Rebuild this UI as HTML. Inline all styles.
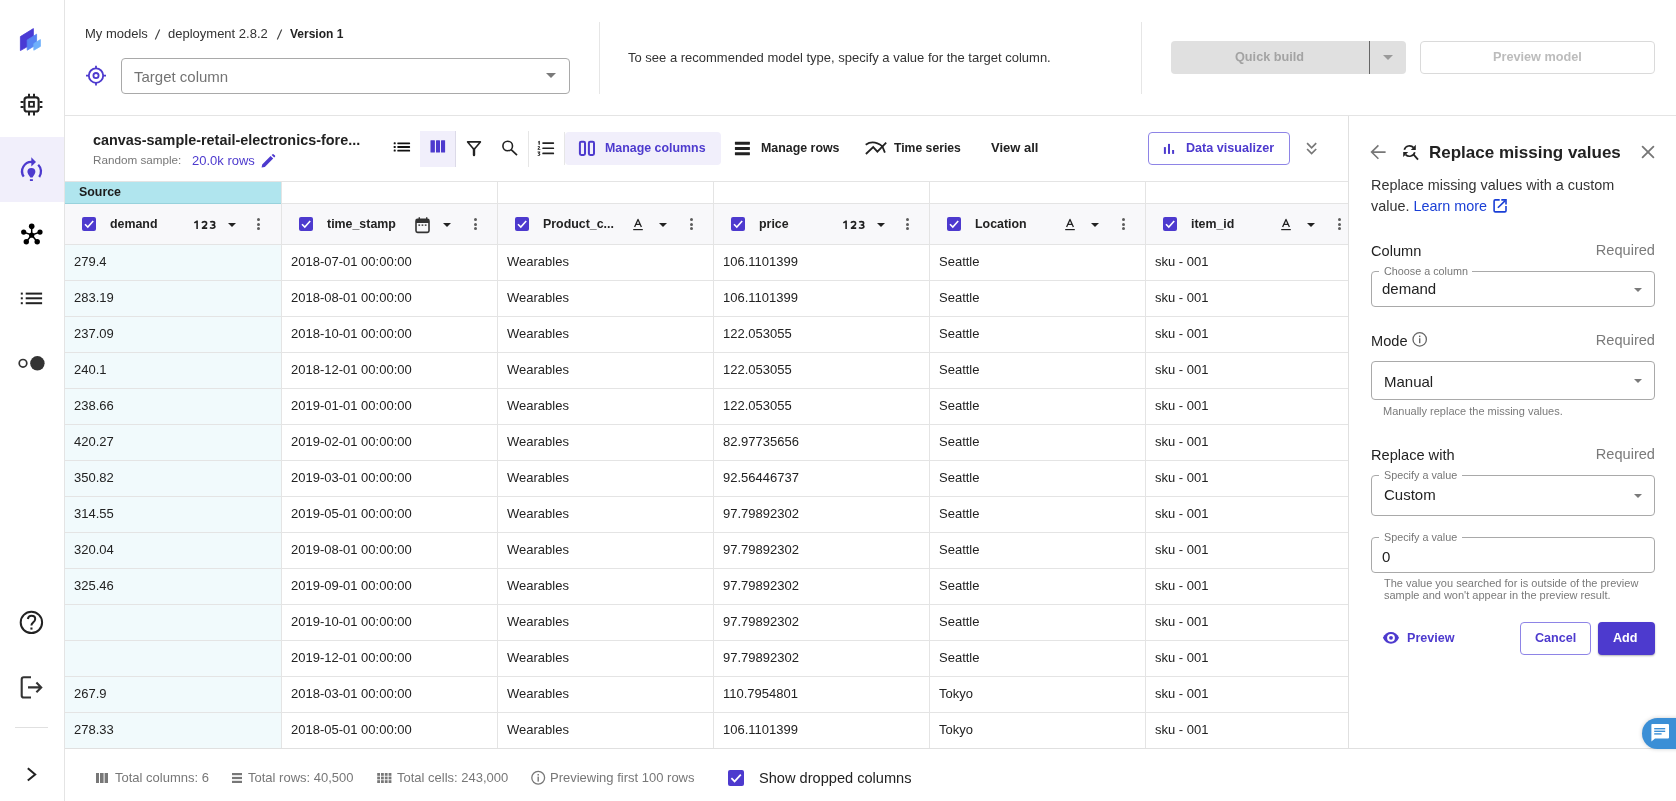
<!DOCTYPE html>
<html><head><meta charset="utf-8"><title>Canvas</title><style>
*{box-sizing:border-box;margin:0;padding:0}
html,body{width:1676px;height:801px;overflow:hidden;background:#fff;font-family:"Liberation Sans",sans-serif;color:#16191f}
.a{position:absolute}
.t{position:absolute;white-space:nowrap;line-height:1}
.b{font-weight:bold}
.sel{position:absolute;border:1px solid #a9a9a9;border-radius:4px;background:#fff}
.tri{position:absolute;width:0;height:0;border-left:5px solid transparent;border-right:5px solid transparent;border-top:5px solid #7a7a7a}
.car{position:absolute;width:0;height:0;border-left:4px solid transparent;border-right:4px solid transparent;border-top:4px solid #222}
.vl{position:absolute;background:#e6e6e6;width:1px}
.cb{position:absolute;width:14px;height:14px;border-radius:2px;background:#4d3ace}
.cell{position:absolute;font-size:13px;color:#222;white-space:nowrap;line-height:1}
.keb{position:absolute;width:3px}
.keb i{display:block;width:3px;height:3px;border-radius:50%;background:#5c5c5c;margin-bottom:1.6px}
</style></head><body><div class="a" style="left:0;top:0;width:1676px;height:801px;will-change:transform">
<div class="a" style="left:0;top:0;width:65px;height:801px;background:#fff;border-right:1px solid #e4e4e4"></div>
<div class="a" style="left:0;top:137px;width:64px;height:65px;background:#f1effb"></div>
<svg class="a" style="left:0;top:0" width="64" height="801" viewBox="0 0 64 801">
<g stroke-linejoin="round">
<path d="M20.4 36.6 L33.4 28.6 L33.4 43.2 L20.4 50.6 Z" fill="#4a3ad4" stroke="#4a3ad4" stroke-width="0.8"/>
<path d="M27.2 40 L36.6 34.2 L36.6 44.6 L27.2 50.2 Z" fill="#5683f2" stroke="#5683f2" stroke-width="0.8"/>
<path d="M33.8 43.6 L40.4 39.6 L40.4 46.4 L33.8 50.2 Z" fill="#6fb0fb" stroke="#6fb0fb" stroke-width="0.8"/>
</g>
<g fill="none" stroke="#222" stroke-width="2">
<rect x="24.5" y="97.4" width="14.1" height="14.1" rx="2.6" stroke-width="2.1"/>
<rect x="29.1" y="101.9" width="4.8" height="4.8" stroke-width="1.9"/>
<path d="M29 93.8V97M34 93.8V97M29 112V115.5M34 112V115.5M20.6 102H23.6M20.6 107H23.6M39.6 102H42.4M39.6 107H42.4"/>
</g>
<g fill="none" stroke="#4d3ace" stroke-width="2.3">
<path d="M23.7 176.6 A9.4 9.4 0 0 1 32.5 162"/>
<path d="M38.2 164.8 A9.4 9.4 0 0 1 39.2 177"/>
</g>
<path d="M31.3 157.2 L36 162 L31.3 166.6 Z" fill="#4d3ace"/>
<path d="M27.4 172 A4 4 0 1 1 35.4 172 Q35.2 174 32.5 177.6 L30.3 177.6 Q27.6 174 27.4 172 Z" fill="#4d3ace"/>
<rect x="29.9" y="179.2" width="3" height="1.8" fill="#4d3ace"/>
<g fill="#000" stroke="#000" stroke-width="1.5">
<path d="M31.7 235 L31.7 226.3 M31.7 235 L23.7 232.1 M31.7 235 L40 232.1 M31.7 235 L26.3 241.8 M31.7 235 L37.2 241.8" fill="none"/>
<circle cx="31.7" cy="235.2" r="2.6" stroke="none"/>
<circle cx="31.7" cy="226.3" r="2.8" stroke="none"/>
<circle cx="23.7" cy="232.1" r="2.6" stroke="none"/>
<circle cx="40" cy="232.1" r="2.6" stroke="none"/>
<circle cx="26.3" cy="241.8" r="2.7" stroke="none"/>
<circle cx="37.2" cy="241.8" r="2.7" stroke="none"/>
</g>
<g fill="#222">
<rect x="20.8" y="292.6" width="2" height="2"/><rect x="20.8" y="297.3" width="2" height="2"/><rect x="20.8" y="302.2" width="2" height="2"/>
<rect x="25.7" y="292.6" width="16.4" height="2"/><rect x="25.7" y="297.3" width="16.4" height="2"/><rect x="25.7" y="302.2" width="16.4" height="2"/>
</g>
<circle cx="23" cy="363.3" r="3.8" fill="none" stroke="#333" stroke-width="1.7"/>
<circle cx="37.4" cy="363.3" r="7.2" fill="#333"/>
<circle cx="31.4" cy="622.4" r="10.7" fill="none" stroke="#222" stroke-width="2"/>
<path d="M27.8 619 Q28.5 615.8 31.5 615.8 Q35.2 615.8 35.2 619 Q35.2 621 33 622.6 Q31.4 623.8 31.4 625.6" fill="none" stroke="#222" stroke-width="2"/>
<rect x="30.4" y="627.5" width="2.1" height="2.1" fill="#222"/>
<path d="M31 677.3 H23.8 Q21.7 677.3 21.7 679.4 V695.4 Q21.7 697.5 23.8 697.5 H31" fill="none" stroke="#333" stroke-width="2.1"/>
<path d="M28 687.4 H41 M36.4 682.6 L41.2 687.4 L36.4 692.2" fill="none" stroke="#333" stroke-width="2.1"/>
<rect x="15" y="727" width="33" height="1" fill="#e0e0e0"/>
<path d="M27.8 768.2 L35.2 774.4 L27.8 780.6" fill="none" stroke="#222" stroke-width="2"/>
</svg>
<div class="a" style="left:65px;top:115px;width:1611px;height:1px;background:#e4e4e4"></div>
<div class="t" style="left:85px;top:27px;font-size:13px;color:#333">My models</div>
<svg class="a" style="left:150px;top:25px" width="140" height="18" viewBox="150 25 140 18"><path d="M155.3 39.5 L159.7 29.5 M277.3 39.5 L281.7 29.5" stroke="#444" stroke-width="1.15"/></svg>
<div class="t" style="left:168px;top:27px;font-size:13px;color:#333">deployment 2.8.2</div>
<div class="t b" style="left:290px;top:28px;font-size:12px;color:#222">Version 1</div>
<svg class="a" style="left:84px;top:64px" width="24" height="24" viewBox="0 0 24 24">
<circle cx="12" cy="11.6" r="7.2" fill="none" stroke="#4d3ace" stroke-width="1.8"/>
<circle cx="12" cy="11.6" r="2.6" fill="none" stroke="#4d3ace" stroke-width="1.8"/>
<path d="M12 1.8V5M12 18.2V21.4M2 11.6H5.2M18.8 11.6H22" stroke="#4d3ace" stroke-width="1.8"/>
</svg>
<div class="sel" style="left:121px;top:58px;width:449px;height:36px"></div>
<div class="t" style="left:134px;top:69px;font-size:15px;color:#737373">Target column</div>
<div class="tri" style="left:546px;top:73px"></div>
<div class="vl" style="left:599px;top:22px;height:72px"></div>
<div class="t" style="left:628px;top:51px;font-size:13px;color:#333">To see a recommended model type, specify a value for the target column.</div>
<div class="vl" style="left:1141px;top:22px;height:72px"></div>
<div class="a" style="left:1171px;top:41px;width:235px;height:33px;background:#e0e0e0;border-radius:4px"></div>
<div class="a" style="left:1369px;top:41px;width:1px;height:33px;background:#666"></div>
<div class="t b" style="left:1235px;top:51px;font-size:12.7px;color:#a3a3a3">Quick build</div>
<div class="tri" style="left:1383px;top:55px;border-top-color:#9a9a9a"></div>
<div class="a" style="left:1420px;top:41px;width:235px;height:33px;border:1px solid #dadada;border-radius:4px"></div>
<div class="t b" style="left:1493px;top:51px;font-size:12.7px;color:#bcbcbc">Preview model</div>
<div class="t b" style="left:93px;top:133px;font-size:14.4px;color:#222">canvas-sample-retail-electronics-fore...</div>
<div class="t" style="left:93px;top:154px;font-size:11.7px;color:#777">Random sample:</div>
<div class="t" style="left:192px;top:154px;font-size:13px;color:#4d3ace">20.0k rows</div>
<svg class="a" style="left:260px;top:154px" width="16" height="14" viewBox="0 0 16 14">
<path d="M2.2 10.4 L10.6 2 L13.2 4.6 L4.8 13 L1.6 13.6 Z M11.6 1 L12.6 0.2 Q13.2 -0.2 13.8 0.4 L15 1.6 Q15.4 2.2 15 2.8 L14.2 3.6 Z" fill="#4d3ace"/>
</svg>
<div class="a" style="left:420px;top:131px;width:35px;height:36px;background:#f1effb"></div>
<div class="vl" style="left:455px;top:131px;height:36px;background:#dcdae8"></div>
<div class="vl" style="left:528px;top:131px;height:36px"></div>
<div class="vl" style="left:564px;top:132px;height:33px"></div>
<div class="a" style="left:565px;top:132px;width:156px;height:33px;background:#f1effb;border-radius:4px"></div>
<svg class="a" style="left:380px;top:125px" width="200" height="40" viewBox="380 125 200 40">
<g fill="#111">
<rect x="393.7" y="142.3" width="2" height="2" rx="0.6"/><rect x="393.7" y="146" width="2" height="2" rx="0.6"/><rect x="393.7" y="149.6" width="2" height="2" rx="0.6"/>
<rect x="397.3" y="142.5" width="12.8" height="1.7" rx="0.6"/><rect x="397.3" y="146.1" width="12.8" height="1.8" rx="0.6"/><rect x="397.3" y="149.8" width="12.8" height="1.7" rx="0.6"/>
</g>
<g fill="#4d3ace">
<rect x="430.5" y="140.2" width="4.4" height="12.3" rx="0.5"/><rect x="436" y="140.2" width="4" height="12.3" rx="0.5"/><rect x="441" y="140.2" width="4.1" height="12.3" rx="0.5"/>
</g>
<path d="M467.6 141.9 H480.4 L474 149.4 Z" fill="none" stroke="#222" stroke-width="1.6" stroke-linejoin="round"/>
<path d="M474 149 V155" stroke="#222" stroke-width="2.4" stroke-linecap="round"/>
<circle cx="507.7" cy="146" r="4.8" fill="none" stroke="#222" stroke-width="1.6"/>
<path d="M511.2 149.6 L517 155.2" stroke="#222" stroke-width="1.7"/>
<g fill="#222">
<rect x="542.3" y="142.2" width="11.8" height="1.7" rx="0.6"/><rect x="542.3" y="147.4" width="11.8" height="1.7" rx="0.6"/><rect x="542.3" y="152.6" width="11.8" height="1.7" rx="0.6"/>
<path d="M538.4 141.2 L539.8 140.8 V144.8 H538.6 V142.2 L537.8 142.5 Z"/>
<path d="M537.6 146.6 Q538.6 145.8 539.6 146.2 Q540.4 146.8 539.6 148 L538.8 148.9 H540.4 V149.8 H537.6 V149 L538.9 147.6 Q539.2 147.1 538.9 146.9 Q538.4 146.8 537.9 147.3 Z"/>
<path d="M537.6 151.6 H540.2 V152.4 L539.2 153.2 Q540.4 153.4 540.4 154.6 Q540.2 156 538.6 156 Q537.8 156 537.4 155.6 L537.9 154.9 Q538.4 155.2 538.8 155.1 Q539.3 155 539.2 154.5 Q539 154 538.2 154.1 V153.4 L538.9 152.5 H537.6 Z"/>
</g>
</svg>
<svg class="a" style="left:570px;top:130px" width="340" height="36" viewBox="570 130 340 36">
<rect x="579.9" y="141.8" width="5.1" height="13.1" rx="1.3" fill="none" stroke="#4d3ace" stroke-width="2"/>
<rect x="588.9" y="141.8" width="5.1" height="13.1" rx="1.3" fill="none" stroke="#4d3ace" stroke-width="2"/>
<g fill="#222"><rect x="734.9" y="141.7" width="15" height="3" rx="0.4"/><rect x="734.9" y="146.9" width="15" height="3" rx="0.4"/><rect x="734.9" y="152.2" width="15" height="3" rx="0.4"/></g>
<g fill="none" stroke="#222" stroke-width="1.8">
<path d="M865.7 144.7 Q873.5 139.4 882.4 146.4"/>
<path d="M865.9 154 L873.2 147.1 L877.4 151.6 L886.2 142.6"/>
<path d="M882.2 146 L884.9 152.6"/>
</g>
</svg>
<div class="t b" style="left:605px;top:142px;font-size:12.4px;color:#4d3ace">Manage columns</div>
<div class="t b" style="left:761px;top:142px;font-size:12.4px;color:#222">Manage rows</div>
<div class="t b" style="left:894px;top:142px;font-size:12.2px;color:#222">Time series</div>
<div class="t b" style="left:991px;top:141px;font-size:13px;color:#222">View all</div>
<div class="a" style="left:1148px;top:132px;width:142px;height:33px;border:1px solid #8e84e6;border-radius:4px"></div>
<svg class="a" style="left:1160px;top:140px" width="170" height="20" viewBox="1160 140 170 20">
<g fill="#4d3ace"><rect x="1163.9" y="147.1" width="2" height="6.8"/><rect x="1168" y="143.9" width="2" height="10"/><rect x="1172.1" y="150" width="2" height="3.9"/></g>
<path d="M1307.1 143.2 L1311.6 147.8 L1316.2 143.2 M1307.1 149 L1311.6 153.6 L1316.2 149" fill="none" stroke="#777" stroke-width="1.7"/>
</svg>
<div class="t b" style="left:1186px;top:142px;font-size:12.6px;color:#4d3ace">Data visualizer</div>
<div class="a" style="left:65px;top:181px;width:1283px;height:1px;background:#e4e4e4"></div>
<div class="a" style="left:65px;top:182px;width:216px;height:21px;background:#b0e5ee"></div>
<div class="a" style="left:65px;top:203px;width:216px;height:1px;background:#98d2dc"></div>
<div class="t b" style="left:79px;top:186px;font-size:12.4px;color:#1b1b1b">Source</div>
<div class="a" style="left:282px;top:203px;width:1066px;height:1px;background:#e4e4e4"></div>
<div class="a" style="left:65px;top:204px;width:1283px;height:40px;background:#f8f8fa"></div>
<div class="a" style="left:65px;top:245px;width:216px;height:503px;background:#f1fafc"></div>
<div class="a" style="left:65px;top:244px;width:1283px;height:1px;background:#e4e4e4"></div>
<div class="a" style="left:65px;top:280px;width:1283px;height:1px;background:#e4e4e4"></div>
<div class="a" style="left:65px;top:316px;width:1283px;height:1px;background:#e4e4e4"></div>
<div class="a" style="left:65px;top:352px;width:1283px;height:1px;background:#e4e4e4"></div>
<div class="a" style="left:65px;top:388px;width:1283px;height:1px;background:#e4e4e4"></div>
<div class="a" style="left:65px;top:424px;width:1283px;height:1px;background:#e4e4e4"></div>
<div class="a" style="left:65px;top:460px;width:1283px;height:1px;background:#e4e4e4"></div>
<div class="a" style="left:65px;top:496px;width:1283px;height:1px;background:#e4e4e4"></div>
<div class="a" style="left:65px;top:532px;width:1283px;height:1px;background:#e4e4e4"></div>
<div class="a" style="left:65px;top:568px;width:1283px;height:1px;background:#e4e4e4"></div>
<div class="a" style="left:65px;top:604px;width:1283px;height:1px;background:#e4e4e4"></div>
<div class="a" style="left:65px;top:640px;width:1283px;height:1px;background:#e4e4e4"></div>
<div class="a" style="left:65px;top:676px;width:1283px;height:1px;background:#e4e4e4"></div>
<div class="a" style="left:65px;top:712px;width:1283px;height:1px;background:#e4e4e4"></div>
<div class="a" style="left:65px;top:748px;width:1283px;height:1px;background:#e4e4e4"></div>
<div class="a" style="left:281px;top:181px;width:1px;height:567px;background:#e4e4e4"></div>
<div class="a" style="left:497px;top:181px;width:1px;height:567px;background:#e4e4e4"></div>
<div class="a" style="left:713px;top:181px;width:1px;height:567px;background:#e4e4e4"></div>
<div class="a" style="left:929px;top:181px;width:1px;height:567px;background:#e4e4e4"></div>
<div class="a" style="left:1145px;top:181px;width:1px;height:567px;background:#e4e4e4"></div>
<div class="a" style="left:1348px;top:116px;width:1px;height:632px;background:#e0e0e0"></div>
<div class="cb" style="left:82px;top:217px"><svg width="14" height="14" viewBox="0 0 14 14" style="display:block"><path d="M3 7.2 L5.8 10 L11.2 4" fill="none" stroke="#fff" stroke-width="1.6"/></svg></div>
<div class="t b" style="left:110px;top:218px;font-size:12.4px;color:#222">demand</div>
<svg class="a" style="left:191px;top:218px" width="28" height="14" viewBox="191 218 28 14">
<g fill="none" stroke="#222" stroke-width="1.6" stroke-linejoin="round">
<path d="M194.3 222.9 L197.1 221.2 V228.95"/>
<path d="M202 222.9 Q202.5 221.65 204.5 221.65 Q206.6 221.65 206.6 223.4 Q206.6 224.5 205.3 225.6 L202.5 228.1 H207.2"/>
<path d="M210.2 222.2 Q211 221.65 212.4 221.65 Q214.6 221.65 214.6 223.2 Q214.6 224.8 212.3 224.95 Q214.9 225.1 214.9 226.6 Q214.9 228.2 212.4 228.2 Q210.9 228.2 209.9 227.6"/>
</g></svg>
<div class="car" style="left:228px;top:223px"></div>
<div class="keb" style="left:257px;top:218px"><i></i><i></i><i></i></div>
<div class="cb" style="left:299px;top:217px"><svg width="14" height="14" viewBox="0 0 14 14" style="display:block"><path d="M3 7.2 L5.8 10 L11.2 4" fill="none" stroke="#fff" stroke-width="1.6"/></svg></div>
<div class="t b" style="left:327px;top:218px;font-size:12.4px;color:#222">time_stamp</div>
<svg class="a" style="left:415px;top:216px" width="16" height="18" viewBox="0 0 16 18">
<rect x="1" y="3.4" width="13" height="13" rx="1.6" fill="none" stroke="#333" stroke-width="1.6"/>
<rect x="1" y="3.4" width="13" height="3.6" fill="#333"/>
<path d="M4.3 1.2V4M11.7 1.2V4" stroke="#333" stroke-width="1.4"/>
<rect x="3.4" y="8.3" width="1.7" height="1.7" fill="#555"/><rect x="6.6" y="8.3" width="1.7" height="1.7" fill="#555"/><rect x="9.8" y="8.3" width="1.7" height="1.7" fill="#555"/>
</svg>
<div class="car" style="left:443px;top:223px"></div>
<div class="keb" style="left:474px;top:218px"><i></i><i></i><i></i></div>
<div class="cb" style="left:515px;top:217px"><svg width="14" height="14" viewBox="0 0 14 14" style="display:block"><path d="M3 7.2 L5.8 10 L11.2 4" fill="none" stroke="#fff" stroke-width="1.6"/></svg></div>
<div class="t b" style="left:543px;top:218px;font-size:12.4px;color:#222">Product_c...</div>
<svg class="a" style="left:632px;top:217px" width="14" height="15" viewBox="0 0 14 15">
<path d="M2.6 10 L6 2.4 L9.4 10 M3.8 7.4 H8.2" fill="none" stroke="#222" stroke-width="1.3" stroke-linejoin="round"/>
<rect x="1.2" y="12" width="9.6" height="1.2" fill="#222"/>
</svg>
<div class="car" style="left:659px;top:223px"></div>
<div class="keb" style="left:690px;top:218px"><i></i><i></i><i></i></div>
<div class="cb" style="left:731px;top:217px"><svg width="14" height="14" viewBox="0 0 14 14" style="display:block"><path d="M3 7.2 L5.8 10 L11.2 4" fill="none" stroke="#fff" stroke-width="1.6"/></svg></div>
<div class="t b" style="left:759px;top:218px;font-size:12.4px;color:#222">price</div>
<svg class="a" style="left:840px;top:218px" width="28" height="14" viewBox="191 218 28 14">
<g fill="none" stroke="#222" stroke-width="1.6" stroke-linejoin="round">
<path d="M194.3 222.9 L197.1 221.2 V228.95"/>
<path d="M202 222.9 Q202.5 221.65 204.5 221.65 Q206.6 221.65 206.6 223.4 Q206.6 224.5 205.3 225.6 L202.5 228.1 H207.2"/>
<path d="M210.2 222.2 Q211 221.65 212.4 221.65 Q214.6 221.65 214.6 223.2 Q214.6 224.8 212.3 224.95 Q214.9 225.1 214.9 226.6 Q214.9 228.2 212.4 228.2 Q210.9 228.2 209.9 227.6"/>
</g></svg>
<div class="car" style="left:877px;top:223px"></div>
<div class="keb" style="left:906px;top:218px"><i></i><i></i><i></i></div>
<div class="cb" style="left:947px;top:217px"><svg width="14" height="14" viewBox="0 0 14 14" style="display:block"><path d="M3 7.2 L5.8 10 L11.2 4" fill="none" stroke="#fff" stroke-width="1.6"/></svg></div>
<div class="t b" style="left:975px;top:218px;font-size:12.4px;color:#222">Location</div>
<svg class="a" style="left:1064px;top:217px" width="14" height="15" viewBox="0 0 14 15">
<path d="M2.6 10 L6 2.4 L9.4 10 M3.8 7.4 H8.2" fill="none" stroke="#222" stroke-width="1.3" stroke-linejoin="round"/>
<rect x="1.2" y="12" width="9.6" height="1.2" fill="#222"/>
</svg>
<div class="car" style="left:1091px;top:223px"></div>
<div class="keb" style="left:1122px;top:218px"><i></i><i></i><i></i></div>
<div class="cb" style="left:1163px;top:217px"><svg width="14" height="14" viewBox="0 0 14 14" style="display:block"><path d="M3 7.2 L5.8 10 L11.2 4" fill="none" stroke="#fff" stroke-width="1.6"/></svg></div>
<div class="t b" style="left:1191px;top:218px;font-size:12.4px;color:#222">item_id</div>
<svg class="a" style="left:1280px;top:217px" width="14" height="15" viewBox="0 0 14 15">
<path d="M2.6 10 L6 2.4 L9.4 10 M3.8 7.4 H8.2" fill="none" stroke="#222" stroke-width="1.3" stroke-linejoin="round"/>
<rect x="1.2" y="12" width="9.6" height="1.2" fill="#222"/>
</svg>
<div class="car" style="left:1307px;top:223px"></div>
<div class="keb" style="left:1338px;top:218px"><i></i><i></i><i></i></div>
<div class="cell" style="left:74px;top:255px">279.4</div>
<div class="cell" style="left:291px;top:255px">2018-07-01 00:00:00</div>
<div class="cell" style="left:507px;top:255px">Wearables</div>
<div class="cell" style="left:723px;top:255px">106.1101399</div>
<div class="cell" style="left:939px;top:255px">Seattle</div>
<div class="cell" style="left:1155px;top:255px">sku - 001</div>
<div class="cell" style="left:74px;top:291px">283.19</div>
<div class="cell" style="left:291px;top:291px">2018-08-01 00:00:00</div>
<div class="cell" style="left:507px;top:291px">Wearables</div>
<div class="cell" style="left:723px;top:291px">106.1101399</div>
<div class="cell" style="left:939px;top:291px">Seattle</div>
<div class="cell" style="left:1155px;top:291px">sku - 001</div>
<div class="cell" style="left:74px;top:327px">237.09</div>
<div class="cell" style="left:291px;top:327px">2018-10-01 00:00:00</div>
<div class="cell" style="left:507px;top:327px">Wearables</div>
<div class="cell" style="left:723px;top:327px">122.053055</div>
<div class="cell" style="left:939px;top:327px">Seattle</div>
<div class="cell" style="left:1155px;top:327px">sku - 001</div>
<div class="cell" style="left:74px;top:363px">240.1</div>
<div class="cell" style="left:291px;top:363px">2018-12-01 00:00:00</div>
<div class="cell" style="left:507px;top:363px">Wearables</div>
<div class="cell" style="left:723px;top:363px">122.053055</div>
<div class="cell" style="left:939px;top:363px">Seattle</div>
<div class="cell" style="left:1155px;top:363px">sku - 001</div>
<div class="cell" style="left:74px;top:399px">238.66</div>
<div class="cell" style="left:291px;top:399px">2019-01-01 00:00:00</div>
<div class="cell" style="left:507px;top:399px">Wearables</div>
<div class="cell" style="left:723px;top:399px">122.053055</div>
<div class="cell" style="left:939px;top:399px">Seattle</div>
<div class="cell" style="left:1155px;top:399px">sku - 001</div>
<div class="cell" style="left:74px;top:435px">420.27</div>
<div class="cell" style="left:291px;top:435px">2019-02-01 00:00:00</div>
<div class="cell" style="left:507px;top:435px">Wearables</div>
<div class="cell" style="left:723px;top:435px">82.97735656</div>
<div class="cell" style="left:939px;top:435px">Seattle</div>
<div class="cell" style="left:1155px;top:435px">sku - 001</div>
<div class="cell" style="left:74px;top:471px">350.82</div>
<div class="cell" style="left:291px;top:471px">2019-03-01 00:00:00</div>
<div class="cell" style="left:507px;top:471px">Wearables</div>
<div class="cell" style="left:723px;top:471px">92.56446737</div>
<div class="cell" style="left:939px;top:471px">Seattle</div>
<div class="cell" style="left:1155px;top:471px">sku - 001</div>
<div class="cell" style="left:74px;top:507px">314.55</div>
<div class="cell" style="left:291px;top:507px">2019-05-01 00:00:00</div>
<div class="cell" style="left:507px;top:507px">Wearables</div>
<div class="cell" style="left:723px;top:507px">97.79892302</div>
<div class="cell" style="left:939px;top:507px">Seattle</div>
<div class="cell" style="left:1155px;top:507px">sku - 001</div>
<div class="cell" style="left:74px;top:543px">320.04</div>
<div class="cell" style="left:291px;top:543px">2019-08-01 00:00:00</div>
<div class="cell" style="left:507px;top:543px">Wearables</div>
<div class="cell" style="left:723px;top:543px">97.79892302</div>
<div class="cell" style="left:939px;top:543px">Seattle</div>
<div class="cell" style="left:1155px;top:543px">sku - 001</div>
<div class="cell" style="left:74px;top:579px">325.46</div>
<div class="cell" style="left:291px;top:579px">2019-09-01 00:00:00</div>
<div class="cell" style="left:507px;top:579px">Wearables</div>
<div class="cell" style="left:723px;top:579px">97.79892302</div>
<div class="cell" style="left:939px;top:579px">Seattle</div>
<div class="cell" style="left:1155px;top:579px">sku - 001</div>
<div class="cell" style="left:291px;top:615px">2019-10-01 00:00:00</div>
<div class="cell" style="left:507px;top:615px">Wearables</div>
<div class="cell" style="left:723px;top:615px">97.79892302</div>
<div class="cell" style="left:939px;top:615px">Seattle</div>
<div class="cell" style="left:1155px;top:615px">sku - 001</div>
<div class="cell" style="left:291px;top:651px">2019-12-01 00:00:00</div>
<div class="cell" style="left:507px;top:651px">Wearables</div>
<div class="cell" style="left:723px;top:651px">97.79892302</div>
<div class="cell" style="left:939px;top:651px">Seattle</div>
<div class="cell" style="left:1155px;top:651px">sku - 001</div>
<div class="cell" style="left:74px;top:687px">267.9</div>
<div class="cell" style="left:291px;top:687px">2018-03-01 00:00:00</div>
<div class="cell" style="left:507px;top:687px">Wearables</div>
<div class="cell" style="left:723px;top:687px">110.7954801</div>
<div class="cell" style="left:939px;top:687px">Tokyo</div>
<div class="cell" style="left:1155px;top:687px">sku - 001</div>
<div class="cell" style="left:74px;top:723px">278.33</div>
<div class="cell" style="left:291px;top:723px">2018-05-01 00:00:00</div>
<div class="cell" style="left:507px;top:723px">Wearables</div>
<div class="cell" style="left:723px;top:723px">106.1101399</div>
<div class="cell" style="left:939px;top:723px">Tokyo</div>
<div class="cell" style="left:1155px;top:723px">sku - 001</div>
<div class="a" style="left:1349px;top:116px;width:327px;height:632px;background:#fff"></div>
<svg class="a" style="left:1366px;top:140px" width="300" height="80" viewBox="1366 140 300 80">
<path d="M1385.6 152.1 H1372 M1378.4 145.4 L1371.6 152.1 L1378.4 158.8" fill="none" stroke="#777" stroke-width="1.6"/>
<path d="M1642.6 146.6 L1653.4 157.4 M1653.4 146.6 L1642.6 157.4" stroke="#767676" stroke-width="1.8" stroke-linecap="round"/>
<g fill="none" stroke="#222" stroke-width="1.7">
<path d="M1404.3 149.8 A5.5 5.5 0 0 1 1413.6 147.6"/>
<path d="M1414.8 152.2 A5.5 5.5 0 0 1 1405.6 154.6"/>
<path d="M1413.4 154.4 L1418 159.6" stroke-width="1.8"/>
</g>
<path d="M1415.8 144.8 V149.9 H1410.8 Z M1403.2 152 H1408.2 L1403.2 157 Z" fill="#222"/>
<g fill="none" stroke="#1a3fd6" stroke-width="1.6">
<path d="M1499.7 199.9 H1495.3 Q1494.1 199.9 1494.1 201.1 V210.7 Q1494.1 211.9 1495.3 211.9 H1504.8 Q1506 211.9 1506 210.7 V206.1"/>
<path d="M1497.9 207.8 L1505.2 200.6"/>
<path d="M1501.3 199.9 H1506 V204.5"/>
</g>
</svg>
<div class="t b" style="left:1429px;top:144px;font-size:17px;color:#222">Replace missing values</div>
<div class="a" style="left:1371px;top:175px;width:290px;font-size:14.4px;line-height:21px;color:#333">Replace missing values with a custom<br>value. <span style="color:#1a3fd6">Learn more</span></div>
<div class="t" style="left:1371px;top:244px;font-size:14.6px;color:#222">Column</div>
<div class="t" style="right:21px;top:243px;font-size:14.6px;color:#7a7a7a">Required</div>
<div class="t" style="left:1371px;top:334px;font-size:14.6px;color:#222">Mode</div>
<div class="t" style="right:21px;top:333px;font-size:14.6px;color:#7a7a7a">Required</div>
<svg class="a" style="left:1411px;top:331px" width="17" height="17" viewBox="0 0 17 17">
<circle cx="8.7" cy="8.4" r="6.7" fill="none" stroke="#666" stroke-width="1.3"/>
<rect x="8" y="7.2" width="1.4" height="5" fill="#666"/><rect x="8" y="4.6" width="1.4" height="1.5" fill="#666"/>
</svg>
<div class="t" style="left:1371px;top:448px;font-size:14.6px;color:#222">Replace with</div>
<div class="t" style="right:21px;top:447px;font-size:14.6px;color:#7a7a7a">Required</div>
<div class="sel" style="left:1371px;top:271px;width:284px;height:36px"></div>
<div class="a" style="left:1379px;top:270px;width:93px;height:4px;background:#fff"></div>
<div class="t" style="left:1384px;top:266px;font-size:10.8px;color:#777">Choose a column</div>
<div class="t" style="left:1382px;top:281px;font-size:15px;color:#222">demand</div>
<div class="tri" style="left:1634px;top:288px;border-left-width:4.5px;border-right-width:4.5px;border-top-width:4.6px"></div>
<div class="sel" style="left:1371px;top:361px;width:284px;height:39px"></div>
<div class="t" style="left:1384px;top:374px;font-size:15px;color:#222">Manual</div>
<div class="tri" style="left:1634px;top:379px;border-left-width:4.5px;border-right-width:4.5px;border-top-width:4.6px"></div>
<div class="t" style="left:1383px;top:406px;font-size:11px;color:#7a7a7a">Manually replace the missing values.</div>
<div class="sel" style="left:1371px;top:475px;width:284px;height:41px"></div>
<div class="a" style="left:1379px;top:474px;width:83px;height:4px;background:#fff"></div>
<div class="t" style="left:1384px;top:470px;font-size:10.8px;color:#777">Specify a value</div>
<div class="t" style="left:1384px;top:487px;font-size:15px;color:#222">Custom</div>
<div class="tri" style="left:1634px;top:494px;border-left-width:4.5px;border-right-width:4.5px;border-top-width:4.6px"></div>
<div class="sel" style="left:1371px;top:537px;width:284px;height:36px"></div>
<div class="a" style="left:1379px;top:536px;width:83px;height:4px;background:#fff"></div>
<div class="t" style="left:1384px;top:532px;font-size:10.8px;color:#777">Specify a value</div>
<div class="t" style="left:1382px;top:549px;font-size:15px;color:#222">0</div>
<div class="a" style="left:1384px;top:577px;width:270px;font-size:11px;line-height:12px;color:#7a7a7a">The value you searched for is outside of the preview<br>sample and won't appear in the preview result.</div>
<svg class="a" style="left:1381px;top:630px" width="20" height="16" viewBox="0 0 20 16">
<path d="M1.9 7.85 C5 0.05, 14.9 0.05, 18 7.85 C14.9 15.65, 5 15.65, 1.9 7.85 Z" fill="#4d3ace"/>
<circle cx="10" cy="7.85" r="3.9" fill="#fff"/><circle cx="10" cy="7.85" r="1.9" fill="#4d3ace"/>
</svg>
<div class="t b" style="left:1407px;top:632px;font-size:12.6px;color:#4d3ace">Preview</div>
<div class="a" style="left:1520px;top:622px;width:71px;height:33px;border:1px solid #8e84e6;border-radius:4px"></div>
<div class="t b" style="left:1535px;top:632px;font-size:12.6px;color:#4d3ace">Cancel</div>
<div class="a" style="left:1598px;top:622px;width:57px;height:33px;background:#4d3ace;border-radius:4px;box-shadow:0 1px 2px rgba(0,0,0,.3)"></div>
<div class="t b" style="left:1613px;top:632px;font-size:12.6px;color:#fff">Add</div>
<div class="a" style="left:65px;top:748px;width:1611px;height:1px;background:#e0e0e0"></div>
<svg class="a" style="left:90px;top:765px" width="460" height="24" viewBox="90 765 460 24">
<g fill="#777">
<rect x="96" y="773" width="3" height="10"/><rect x="100" y="773" width="3.6" height="10"/><rect x="104.6" y="773" width="3.4" height="10"/>
<rect x="232" y="773" width="10" height="2.2"/><rect x="232" y="776.9" width="10" height="2.2"/><rect x="232" y="780.8" width="10" height="2.2"/>
</g>
<g fill="#777">
<rect x="377.2" y="773" width="2.8" height="2.8"/><rect x="381" y="773" width="2.8" height="2.8"/><rect x="384.8" y="773" width="2.8" height="2.8"/><rect x="388.6" y="773" width="2.8" height="2.8"/>
<rect x="377.2" y="776.6" width="2.8" height="2.8"/><rect x="381" y="776.6" width="2.8" height="2.8"/><rect x="384.8" y="776.6" width="2.8" height="2.8"/><rect x="388.6" y="776.6" width="2.8" height="2.8"/>
<rect x="377.2" y="780.2" width="2.8" height="2.8"/><rect x="381" y="780.2" width="2.8" height="2.8"/><rect x="384.8" y="780.2" width="2.8" height="2.8"/><rect x="388.6" y="780.2" width="2.8" height="2.8"/>
</g>
<circle cx="538.2" cy="777.8" r="6.4" fill="none" stroke="#777" stroke-width="1.3"/>
<rect x="537.5" y="776.6" width="1.4" height="5" fill="#777"/><rect x="537.5" y="774" width="1.4" height="1.5" fill="#777"/>
</svg>
<div class="t" style="left:115px;top:771px;font-size:13px;color:#777">Total columns: 6</div>
<div class="t" style="left:248px;top:771px;font-size:13px;color:#777">Total rows: 40,500</div>
<div class="t" style="left:397px;top:771px;font-size:13px;color:#777">Total cells: 243,000</div>
<div class="t" style="left:550px;top:771px;font-size:13px;color:#777">Previewing first 100 rows</div>
<div class="cb" style="left:728px;top:770px;width:16px;height:16px"><svg width="16" height="16" viewBox="0 0 16 16" style="display:block"><path d="M3.4 8.2 L6.6 11.4 L12.8 4.6" fill="none" stroke="#fff" stroke-width="1.7"/></svg></div>
<div class="t" style="left:759px;top:771px;font-size:14.6px;color:#222">Show dropped columns</div>
<div class="a" style="left:1642px;top:718px;width:50px;height:31px;border-radius:16px;background:#3b8fd6;box-shadow:0 0 4px rgba(0,0,0,.2)"></div>
<svg class="a" style="left:1648px;top:722px" width="24" height="22" viewBox="0 0 24 22">
<path d="M4 2 H20 Q21 2 21 3 V15.4 Q21 16.4 20 16.4 H7 L3.4 19.6 V3 Q3.4 2 4 2 Z" fill="#fff"/>
<rect x="6.2" y="6" width="11" height="1.4" fill="#3b8fd6"/><rect x="6.2" y="8.6" width="11" height="1.4" fill="#3b8fd6"/><rect x="6.2" y="11.2" width="7.4" height="1.4" fill="#3b8fd6"/>
</svg>
</div></body></html>
